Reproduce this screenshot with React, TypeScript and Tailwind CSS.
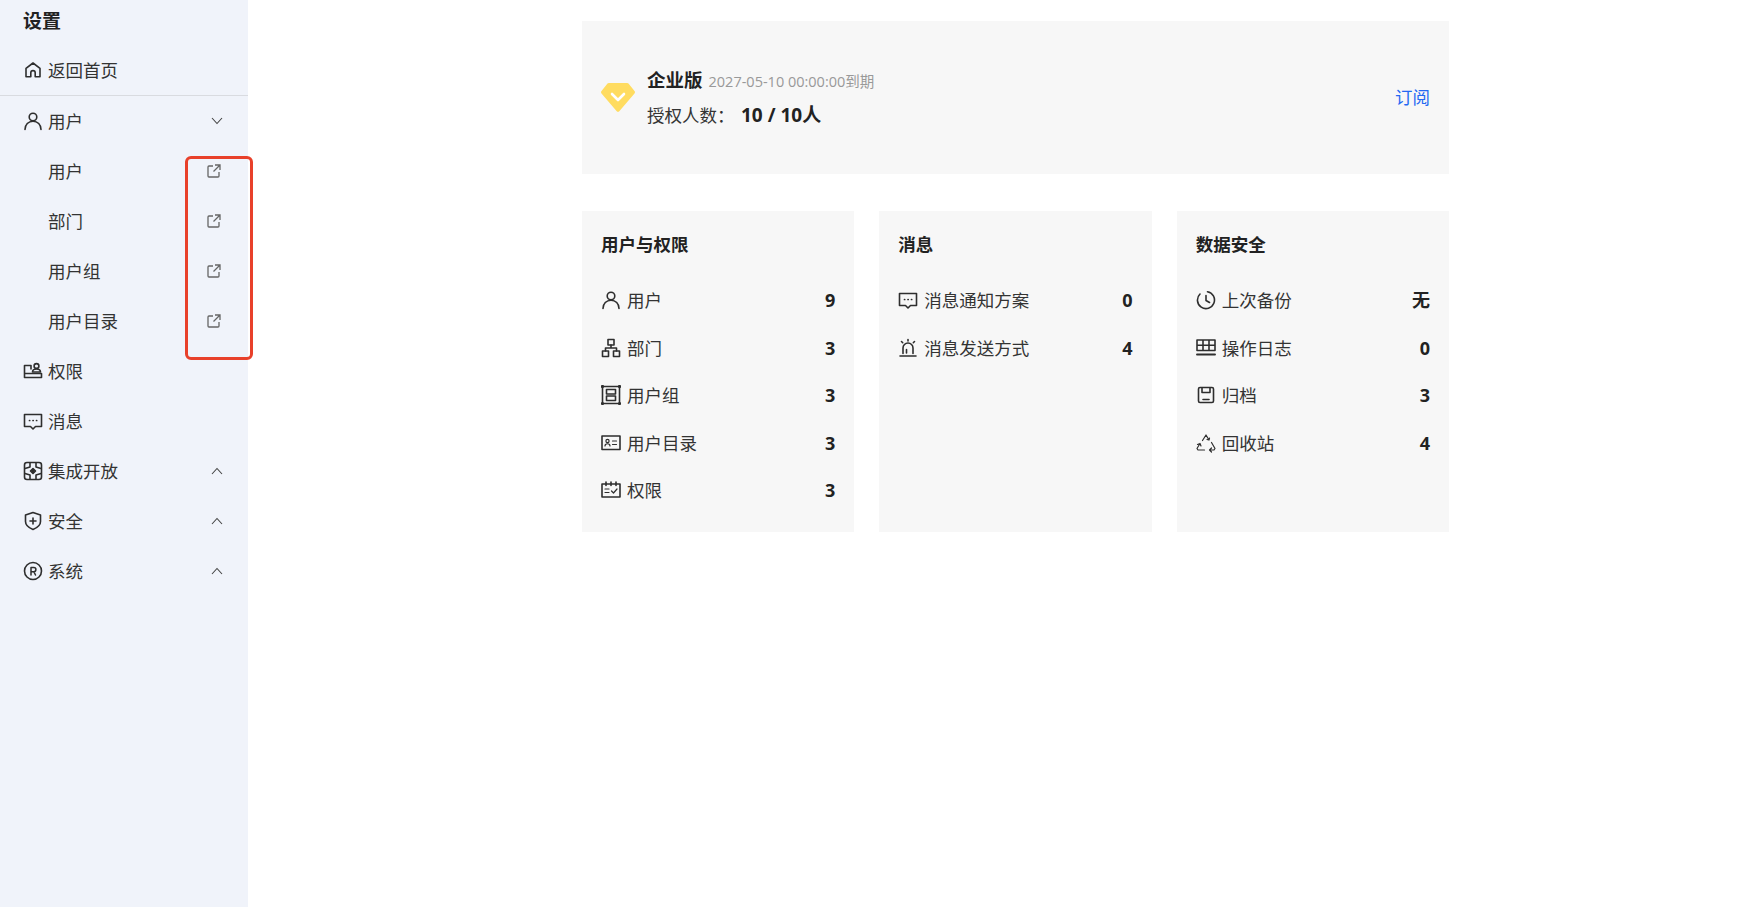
import type { ReactNode } from "react";

const font = { fontFamily: '"Open Sans", "Noto Sans CJK SC", sans-serif' };

function Svg({ size = 20, children }: { size?: number; children: ReactNode }) {
  return (
    <svg
      width={size}
      height={size}
      viewBox="0 0 20 20"
      fill="none"
      stroke="#2e2e2e"
      strokeWidth="1.6"
      strokeLinecap="round"
      strokeLinejoin="round"
      className="shrink-0"
    >
      {children}
    </svg>
  );
}

const HomeIcon = () => (
  <Svg>
    <path d="M3 8.4 10 3l7 5.4v8.4h-4.800v-4a2.200 2.200 0 0 0-4.400 0v4H3z" />
  </Svg>
);
const UserIcon = () => (
  <Svg>
    <circle cx="10" cy="6" r="3.8" />
    <path d="M2 18.500c0-4.800 3.400-8.300 8-8.300s8 3.500 8 8.300" />
  </Svg>
);
const DeptIcon = () => (
  <Svg>
    <rect x="7" y="1.5" width="6" height="5.5" />
    <rect x="1.5" y="13" width="6" height="5.5" />
    <rect x="12.5" y="13" width="6" height="5.5" />
    <path d="M10 7v3M4.500 13v-3h11v3" />
  </Svg>
);
const GroupIcon = () => (
  <Svg>
    <rect x="1.5" y="1.5" width="17" height="17" />
    <rect x="5.5" y="4.5" width="9" height="4.5" />
    <rect x="5.5" y="11" width="9" height="4.5" />
    <circle cx="1.5" cy="1.5" r=".8" />
    <circle cx="18.5" cy="1.5" r=".8" />
    <circle cx="1.5" cy="18.5" r=".8" />
    <circle cx="18.5" cy="18.5" r=".8" />
  </Svg>
);
const CardIcon = () => (
  <Svg>
    <rect x="1" y="3" width="18" height="13.5" />
    <circle cx="6.5" cy="8" r="1.6" strokeWidth="1.2" />
    <path d="M4 13c0-3 5-3 5 0M11.500 8h4M11.500 11.500h4" strokeWidth="1.2" />
  </Svg>
);
const CalendarIcon = () => (
  <Svg>
    <path d="M1 4h18v13H1zM5 2v3.500M10 2v3.500M15 2v3.500" />
    <path d="M4 9h4M4 12.500h4M10.500 11l2 2 3.500-4" strokeWidth="1.2" />
  </Svg>
);
const PermIcon = () => (
  <Svg>
    <path d="M1.500 9V4.500h6.500V8M1.500 9v7.500h17V12.500H7.500M1.500 12.500h6" />
    <circle cx="13.5" cy="5" r="2.4" />
    <path d="M9.500 11c0-2 1.800-3 4-3s4 1 4 3z" />
  </Svg>
);
const MessageIcon = () => (
  <Svg>
    <path d="M1.500 3.500h17v12h-6L10 18l-2.500-2.500h-6z" />
    <path d="M6.500 9.500h.2M10 9.500h.2M13.500 9.500h.2" strokeWidth="1.7" />
  </Svg>
);
const AlarmIcon = () => (
  <Svg>
    <path d="M5 15.500V10a5 5 0 0 1 10 0v5.500M2 18h16M8.500 15v-3.500" />
    <path d="M10 1.500V3M3.500 3.500l1.200 1.200M16.500 3.500l-1.200 1.200" />
  </Svg>
);
const IntegrateIcon = () => (
  <Svg>
    <rect x="1.5" y="1.5" width="17" height="17" rx="2.5" />
    <path d="M7 2v4L2 7.500M13 2v4l5 1.500M7 18v-4l-5-1.500M13 18v-4l5-1.500" />
    <path d="m10 7.500 2.500 2.500-2.500 2.500L7.500 10z" fill="#2e2e2e" />
  </Svg>
);
const ShieldIcon = () => (
  <Svg>
    <path d="M10 1.500 17.500 4v6.500c0 3.700-3.300 6.300-7.500 8-4.200-1.700-7.500-4.300-7.500-8V4z" />
    <path d="M10 7v6M7 10h6" />
  </Svg>
);
const RegisteredIcon = () => (
  <Svg>
    <circle cx="10" cy="10" r="8.5" />
    <path d="M8 14V6.500h2.800a2 2 0 0 1 0 4.200H8M10.800 10.700 12.500 14" strokeWidth="1.5" />
  </Svg>
);
const ClockIcon = () => (
  <Svg>
    <path d="M11.500 1.700A8.500 8.500 0 1 1 4 4M10 5.500v5l3.500 2" />
  </Svg>
);
const TableIcon = () => (
  <Svg>
    <path d="M1 2h18v10.500H1zM1 7.200h18M7 2v10.500M13 2v10.500" />
    <path d="M1 16.500h18" strokeWidth="1.9" />
  </Svg>
);
const SaveIcon = () => (
  <Svg>
    <rect x="2.5" y="2.5" width="15" height="15" rx="1.5" />
    <path d="M6 3v4.500h8V3M7 14.500h6" />
  </Svg>
);
const RecycleIcon = () => (
  <Svg>
    <path d="M6.500 7.500 10 2l3 5M11 6.500l2 .5.500-2" strokeWidth="1.2" />
    <path d="M15.500 9.500 19 15.500l-1 1.500h-4.500M15.500 15l-2 2 2 2" strokeWidth="1.2" />
    <path d="M8.500 17H2l-1-1.500L4 10.500M1.500 11.500l2.500-1 1 2.500" strokeWidth="1.2" />
  </Svg>
);

function ChevronIcon({ up }: { up?: boolean }) {
  return (
    <svg width="12" height="8" viewBox="0 0 12 8" fill="none" stroke="#444" strokeWidth="1.1" className="shrink-0">
      <path d={up ? "M1 7 6 1.500 11 7" : "M1 1l5 5.500L11 1"} />
    </svg>
  );
}

function ExternalIcon() {
  return (
    <svg width="14" height="14" viewBox="0 0 14 14" fill="none" stroke="#666" strokeWidth="1.3" className="shrink-0">
      <path d="M6 2H2a1 1 0 0 0-1 1v9a1 1 0 0 0 1 1h9a1 1 0 0 0 1-1V8M8 1h5v5M13 1 6.500 7.500" />
    </svg>
  );
}

function NavRow({ icon, label, chevron }: { icon: ReactNode; label: string; chevron?: "up" | "down" }) {
  return (
    <div className="flex h-[50px] items-center pl-[23px] pr-[25px] text-[17.5px] text-[#333]">
      <span className="mr-[5px] flex w-5 justify-start">{icon}</span>
      <span className="flex-1">{label}</span>
      {chevron && <ChevronIcon up={chevron === "up"} />}
    </div>
  );
}

function SubRow({ label }: { label: string }) {
  return (
    <div className="flex h-[50px] items-center pl-12 pr-[27px] text-[17.5px] text-[#333]">
      <span className="flex-1">{label}</span>
      <ExternalIcon />
    </div>
  );
}

function Sidebar() {
  return (
    <aside className="relative w-[248px] shrink-0 bg-[#f0f3fa]">
      <div className="flex h-[45px] items-center pb-[2px] pl-[23px] text-[19px] font-bold text-[#222]">设置</div>
      <div className="border-b border-[#d9dbe0]">
        <NavRow icon={<HomeIcon />} label="返回首页" />
      </div>
      <NavRow icon={<UserIcon />} label="用户" chevron="down" />
      <SubRow label="用户" />
      <SubRow label="部门" />
      <SubRow label="用户组" />
      <SubRow label="用户目录" />
      <NavRow icon={<PermIcon />} label="权限" />
      <NavRow icon={<MessageIcon />} label="消息" />
      <NavRow icon={<IntegrateIcon />} label="集成开放" chevron="up" />
      <NavRow icon={<ShieldIcon />} label="安全" chevron="up" />
      <NavRow icon={<RegisteredIcon />} label="系统" chevron="up" />
      <div className="absolute left-[185px] top-[156px] h-[204px] w-[68px] rounded-md border-[3px] border-[#e8402a]" />
    </aside>
  );
}

type Item = { icon: ReactNode; label: string; value: string };

function StatCard({ title, items }: { title: string; items: Item[] }) {
  return (
    <section className="h-[321px] bg-[#f7f7f7] px-[19px] pt-[21px]">
      <h3 className="mb-[20.5px] h-6 text-[17.5px] leading-6 font-bold text-[#222]">{title}</h3>
      {items.map((item) => (
        <div key={item.label} className="flex h-[47.5px] items-center text-[17.5px] text-[#333]">
          <span className="mr-1.5 flex w-5 justify-start">{item.icon}</span>
          <span className="flex-1">{item.label}</span>
          <span className="text-lg font-bold text-[#222]">{item.value}</span>
        </div>
      ))}
    </section>
  );
}

export default function App() {
  return (
    <div className="flex h-[907px] bg-white" style={font}>
      <Sidebar />
      <main className="ml-[334px] w-[867px] pt-[21px]">
        <div className="flex h-[153px] items-center bg-[#f7f7f7] pl-[19px] pr-[19px]">
          <svg width="34" height="29" viewBox="0 0 34 29" className="mr-3 shrink-0">
            <path d="M8 0h18a2 2 0 0 1 1.500.6l6 7.400a2 2 0 0 1 0 2.500L18.500 28a2 2 0 0 1-3 0L.5 10.500a2 2 0 0 1 0-2.500l6-7.400A2 2 0 0 1 8 0z" fill="#ffdc60" />
            <path d="m11 11 6 6 6-6" fill="none" stroke="#fff" strokeWidth="2.6" strokeLinecap="round" strokeLinejoin="round" />
          </svg>
          <div className="flex-1">
            <div className="flex items-baseline">
              <span className="text-[18.5px] font-bold text-[#222]">企业版</span>
              <span className="ml-1.5 text-[14.5px] text-[#999]">2027-05-10 00:00:00到期</span>
            </div>
            <div className="mt-[7px] flex items-baseline text-[17.5px] text-[#333]">
              <span className="w-[94px]">授权人数：</span>
              <span className="text-[19px] font-bold text-[#222]">10 / 10人</span>
            </div>
          </div>
          <span className="text-[17.5px] text-[#2468f2]">订阅</span>
        </div>
        <div className="mt-[37px] grid grid-cols-3 gap-[25px]">
          <StatCard
            title="用户与权限"
            items={[
              { icon: <UserIcon />, label: "用户", value: "9" },
              { icon: <DeptIcon />, label: "部门", value: "3" },
              { icon: <GroupIcon />, label: "用户组", value: "3" },
              { icon: <CardIcon />, label: "用户目录", value: "3" },
              { icon: <CalendarIcon />, label: "权限", value: "3" },
            ]}
          />
          <StatCard
            title="消息"
            items={[
              { icon: <MessageIcon />, label: "消息通知方案", value: "0" },
              { icon: <AlarmIcon />, label: "消息发送方式", value: "4" },
            ]}
          />
          <StatCard
            title="数据安全"
            items={[
              { icon: <ClockIcon />, label: "上次备份", value: "无" },
              { icon: <TableIcon />, label: "操作日志", value: "0" },
              { icon: <SaveIcon />, label: "归档", value: "3" },
              { icon: <RecycleIcon />, label: "回收站", value: "4" },
            ]}
          />
        </div>
      </main>
    </div>
  );
}
